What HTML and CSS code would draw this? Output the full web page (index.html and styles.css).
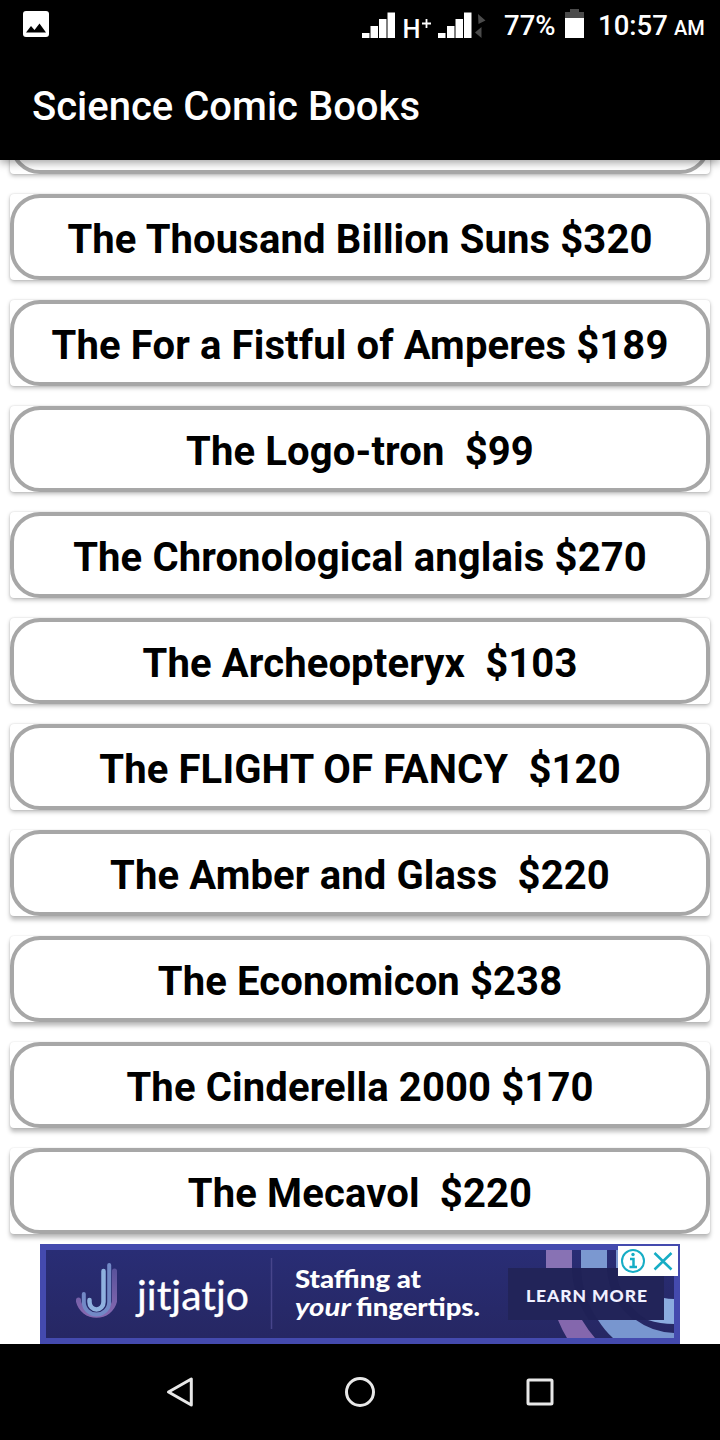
FILE: index.html
```html
<!DOCTYPE html>
<html lang="en">
<head>
<meta charset="utf-8">
<title>Science Comic Books</title>
<link rel="stylesheet" href="styles.css">
</head>
<body>
<div class="screen">
  <header class="top">
    <div class="status">
      <svg class="photo" width="26" height="26" viewBox="0 0 26 26"><rect width="26" height="26" rx="3" fill="#fff"/><path d="M3 21.500L8 15L11.500 19L16.500 12.500L23 21.500Z" fill="#000"/></svg>
      <svg class="signals" width="132" height="50" viewBox="0 0 132 50">
        <path fill="#fff" d="M1 33h7.500v5H1zM9.500 26h7.500v12h-7.500zM18 19h7.500v19H18zM26.500 12.500H34V38h-7.500zM77 33h7.500v5H77zM86 26h7.500v12H86zM94.500 19h7.500v19h-7.500zM103 12.500h7.500V38H103z"/>
        <text class="network" x="41.500" y="37.500" textLength="18" lengthAdjust="spacingAndGlyphs">H</text>
        <path d="M65.500 19v9M61 23.500h9" stroke="#fff" stroke-width="1.800"/>
        <path d="M117 14l7.500 6.500-7 3.500zM120.500 27v11l-6.500-5.500z" fill="#4b4b4b"/>
      </svg>
      <span class="battery-level">77%</span>
      <svg class="battery" width="20" height="30" viewBox="0 0 20 30"><path d="M0 3h5V0h9v3h5v7H0z" fill="#4b4b4b"/><path d="M0 9h19v20H0z" fill="#fff"/></svg>
      <span class="clock">10:57</span><span class="meridiem">AM</span>
    </div>
    <h1 class="title">Science Comic Books</h1>
  </header>
  <main class="list">
    <div class="item"><div class="label"></div></div>
    <div class="item"><div class="label">The Thousand Billion Suns $320</div></div>
    <div class="item"><div class="label">The For a Fistful of Amperes $189</div></div>
    <div class="item"><div class="label">The Logo-tron&nbsp; $99</div></div>
    <div class="item"><div class="label">The Chronological anglais $270</div></div>
    <div class="item"><div class="label">The Archeopteryx&nbsp; $103</div></div>
    <div class="item"><div class="label">The FLIGHT OF FANCY&nbsp; $120</div></div>
    <div class="item low"><div class="label">The Amber and Glass&nbsp; $220</div></div>
    <div class="item low"><div class="label">The Economicon $238</div></div>
    <div class="item low"><div class="label">The Cinderella 2000 $170</div></div>
    <div class="item low"><div class="label">The Mecavol&nbsp; $220</div></div>
  </main>
  <svg class="ad" width="640" height="100" viewBox="0 0 640 100">
    <defs>
      <linearGradient id="navy" x1="0" y1="0" x2="0" y2="1"><stop offset="0" stop-color="#292d75"/><stop offset="1" stop-color="#262763"/></linearGradient>
      <linearGradient id="violet" gradientUnits="userSpaceOnUse" x1="0" y1="27" x2="0" y2="76"><stop offset="0" stop-color="#5b539c"/><stop offset="1" stop-color="#8a6ab2"/></linearGradient>
      <clipPath id="inside"><rect x="6" y="6" width="628" height="88"/></clipPath>
    </defs>
    <rect width="640" height="100" fill="#444aae"/>
    <rect x="6" y="6" width="628" height="88" fill="url(#navy)"/>
    <g clip-path="url(#inside)">
      <path d="M506 6h26v18h-26z" fill="#8872b4"/>
      <path d="M541 6h26v18h-26zM576 6h26v18h-26z" fill="#7b98d0"/>
      <path d="M518 76h24q6 10 13 18h-28q-5-8-9-18z" fill="#8467ad"/>
      <path d="M558 76h38q16 12 38 13v5h-61q-8-7-15-18z" fill="#7896cf"/>
      <path d="M624 54q4 1 10 1v25q-14 0-26-4h16z" fill="#8bacdf"/>
    </g>
    <rect x="468" y="24" width="156" height="52" fill="#222459"/>
    <path d="M532 24h9q1 31 17 52h-9q-16-24-17-52zM567 24h9q2 34 31 52h-13q-25-20-27-52z" fill="#1f2156"/>
    <g fill="none" stroke-linecap="round" stroke-width="5">
      <path d="M74.500 27V57.500a18.500 18 0 0 1-36 0V56" stroke="url(#violet)"/>
      <path d="M69.200 21V58a12.700 12.500 0 0 1-25.400 0V50" stroke="#7289c6" stroke-width="4"/>
      <path d="M63.500 27V58a7 7.500 0 0 1-14 0V56" stroke="#8fb1df" stroke-width="4.500"/>
    </g>
    <text class="brand" x="97" y="66" textLength="112" lengthAdjust="spacingAndGlyphs">jitjatjo</text>
    <path d="M231.500 14v71" stroke="#47458b" stroke-width="1.500"/>
    <text class="slogan" x="255" y="43.500" textLength="126" lengthAdjust="spacingAndGlyphs">Staffing at</text>
    <text class="slogan slanted" x="255" y="71.500" textLength="56" lengthAdjust="spacingAndGlyphs">your</text>
    <text class="slogan" x="316" y="71.500" textLength="124" lengthAdjust="spacingAndGlyphs">fingertips.</text>
    <text class="action" x="486" y="57.500" textLength="121">LEARN MORE</text>
    <path d="M578 2h60v30h-60z" fill="#fff"/>
    <g fill="none" stroke="#16adc5" stroke-width="2">
      <circle cx="593" cy="17" r="11"/>
      <path d="M614.500 9l17 16.500M631.500 9l-17 16.500" stroke-width="2.500"/>
      <path d="M590 15h3.500v8M589.500 23h7.500" stroke-width="2.500"/>
    </g>
    <circle cx="593" cy="10.500" r="1.700" fill="#16adc5"/>
  </svg>
  <nav class="nav">
    <svg width="32" height="36" viewBox="0 0 32 36"><path d="M27.300 5v26L4.500 18z" fill="none" stroke="#e8e8e8" stroke-width="3" stroke-linejoin="round"/></svg>
    <svg width="32" height="36" viewBox="0 0 32 36"><circle cx="16" cy="18" r="13.500" fill="none" stroke="#e8e8e8" stroke-width="3"/></svg>
    <svg width="32" height="36" viewBox="0 0 32 36"><rect x="4" y="6" width="24" height="24" rx="1" fill="none" stroke="#e8e8e8" stroke-width="3"/></svg>
  </nav>
</div>
</body>
</html>
```
FILE: styles.css
```css
* { box-sizing: border-box; }
body { margin: 0; background: #fff; font-family: Roboto, sans-serif; }
svg { display: block; flex: none; }
.screen { width: 720px; height: 1440px; display: flex; flex-direction: column; overflow: hidden; }
.top { position: relative; z-index: 1; height: 160px; flex: none; background: #000; color: #fff; box-shadow: 0 3px 8px rgba(0, 0, 0, 0.35); }
.status { height: 50px; display: flex; align-items: center; padding-left: 23px; font-size: 27.500px; line-height: 50px; font-weight: 500; }
.photo { margin-top: -2px; }
.signals { margin-left: 312px; }
.network { font: 500 26px Roboto, sans-serif; fill: #fff; }
.battery-level { width: 53px; margin: 2px 0 0 11px; }
.battery { margin: -3px 0 0 8px; }
.clock { width: 72px; margin: 2px 0 0 13px; }
.meridiem { margin: 6px 0 0 4px; font-size: 20px; }
.title { margin: 0; padding: 27px 0 0 32px; font-size: 40px; line-height: 60px; font-weight: 500; }
.list { height: 1084px; flex: none; display: flex; flex-direction: column; justify-content: flex-end; gap: 20px; padding: 0 10px 10px; overflow: hidden; }
.item { height: 86px; flex: none; background: #fff; border-radius: 4px; box-shadow: 0 2px 4px rgba(0, 0, 0, 0.26), 0 0 2px rgba(0, 0, 0, 0.14); }
.low { box-shadow: 0 4px 4px rgba(0, 0, 0, 0.26), 0 0 2px rgba(0, 0, 0, 0.14); }
.label { height: 86px; border: 4px solid #a7a7a7; border-radius: 30px; display: flex; align-items: center; justify-content: center; padding-top: 5px; color: #000; font-size: 40px; letter-spacing: 0.130px; font-weight: 700; white-space: nowrap; }
.ad { margin: 0 40px; }
.brand { font: 400 40px Lato, sans-serif; fill: #fff; stroke: #fff; stroke-width: 0.300px; }
.slogan { font: 900 24px Lato, sans-serif; fill: #fff; }
.slanted { font-style: italic; font-weight: 700; }
.action { font: 900 17.500px Lato, sans-serif; fill: #f0f0ff; }
.nav { height: 96px; background: #000; display: flex; align-items: center; justify-content: center; gap: 148px; }
```
